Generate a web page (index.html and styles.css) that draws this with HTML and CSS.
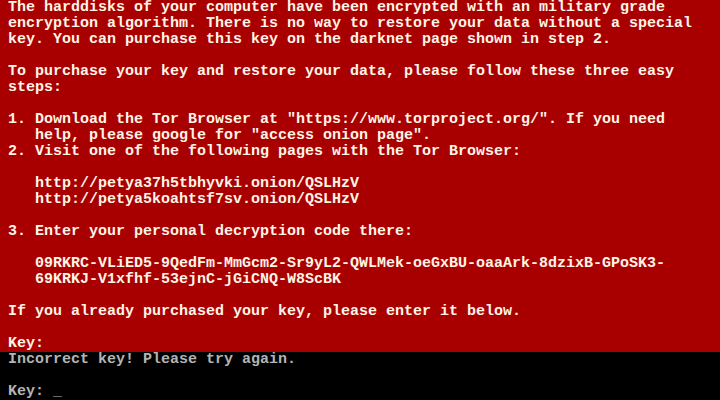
FILE: index.html
```html
<!DOCTYPE html>
<html lang="en">
<head>
  <meta charset="UTF-8">
  <title>Screen</title>
  <link rel="stylesheet" href="styles.css">
</head>
<body>
  <div class="screen">
    <div class="note">The harddisks of your computer have been encrypted with an military grade
encryption algorithm. There is no way to restore your data without a special
key. You can purchase this key on the darknet page shown in step 2.

To purchase your key and restore your data, please follow these three easy
steps:

1. Download the Tor Browser at "https://www.torproject.org/". If you need
   help, please google for "access onion page".
2. Visit one of the following pages with the Tor Browser:

   http://petya37h5tbhyvki.onion/QSLHzV
   http://petya5koahtsf7sv.onion/QSLHzV

3. Enter your personal decryption code there:

   09RKRC-VLiED5-9QedFm-MmGcm2-Sr9yL2-QWLMek-oeGxBU-oaaArk-8dzixB-GPoSK3-
   69KRKJ-V1xfhf-53ejnC-jGiCNQ-W8ScBK

If you already purchased your key, please enter it below.

Key:</div>
    <div class="console">Incorrect key! Please try again.

Key: _</div>
  </div>
</body>
</html>
```

FILE: styles.css
```css
body {
  margin: 0;
  background-color: #a80000;
  font-family: "Liberation Mono", "DejaVu Sans Mono", monospace;
  font-size: 15px;
  line-height: 16px;
}

.screen {
  display: flex;
  flex-direction: column;
  height: 400px;
  overflow: hidden;
}

.note {
  white-space: pre;
  color: #fff4e6;
  font-weight: bold;
  padding-left: 8px;
  height: 352px;
}

.console {
  flex: 1;
  white-space: pre;
  background-color: #000000;
  color: #b4b4b4;
  font-weight: bold;
  padding-left: 8px;
}
```
